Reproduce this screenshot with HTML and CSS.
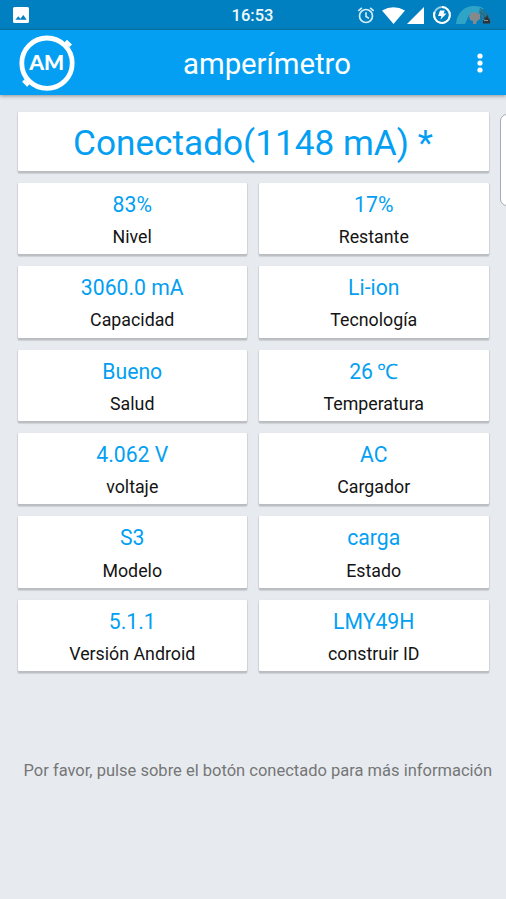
FILE: index.html
```html
<!DOCTYPE html>
<html lang="es">
<head>
<meta charset="utf-8">
<title>amperímetro</title>
<link rel="stylesheet" href="styles.css">
</head>
<body>
<header class="status">
  <svg class="status-photo" viewBox="0 0 16 16"><path fill="#fff" fill-rule="evenodd" d="M1.500 0h13a1.500 1.500 0 0 1 1.500 1.500v13a1.500 1.500 0 0 1-1.500 1.500h-13a1.500 1.500 0 0 1-1.500-1.500v-13a1.500 1.500 0 0 1 1.500-1.500zM2.500 12.800h11.200L10.300 8 7.400 11.700 5.200 9.200z"/></svg>
  <time class="clock">16:53</time>
  <div class="status-icons">
    <svg class="alarm" viewBox="0 0 18 18" fill="none" stroke="#d5edf7"><circle cx="9" cy="10" r="6.500" stroke-width="1.700"/><path stroke-width="1.600" d="M9 6.200v4.300l3 1.900M1.300 4.800l3.500-3M16.700 4.800l-3.500-3"/></svg>
    <svg class="wifi" viewBox="0 0 23 17"><path fill="#fff" d="M11.500 17L0 3.500Q11.500-3 23 3.500z"/></svg>
    <svg class="signal" viewBox="0 0 17 17"><path fill="#fff" d="M17 0v17H0z"/></svg>
    <svg class="charge" viewBox="0 0 18 18"><circle cx="9" cy="9" r="7.900" fill="none" stroke="#9fd0e6" stroke-width="2"/><path d="M9 1.100a7.900 7.900 0 1 1-7.400 5" fill="none" stroke="#fff" stroke-width="2"/><path fill="#fff" d="M7 4.500h4.800L10.600 7.500h2.900L7.400 13.800l1-3.800H5.100z"/></svg>
    <svg class="gauge" viewBox="0 0 36 18"><path fill="#2fa4c7" d="M0 18C1 7 8 0 18 0c5 0 8 1 10 3l-5 4-10 2-4 9z"/><path fill="#23708f" d="M24 2c7 3 10 8 11 15h-8l-4-10z"/><path stroke="#2fa4c7" stroke-dasharray="1 1.500" fill="none" d="M24 4c5 2 7 6 8 10M23 7c3 2 4 4 4 7"/><path fill="#85898b" d="M13 10l2-3 3-1 3 1 3 1v5l-3 2-1 3h-3v-3l-3-1z"/><path fill="#303237" d="M27 17.500v-3l2-1-1-2h2l1-3 1 3 2 3v3z"/><path stroke="#8d9292" d="M28 14.500h4"/></svg>
  </div>
</header>
<div class="appbar">
  <svg class="logo" viewBox="0 0 64 64"><g fill="none" stroke="#fff"><circle cx="32" cy="32.200" r="25.200" stroke-width="4.800"/><path stroke-width="4" d="M50 14.500l3.500-3.500M14 50l-3.500 3.500"/><path stroke-width="3.400" d="M50.800 10l5 4.800M8.300 49.600l5 4.800"/></g><text x="31.700" y="39" text-anchor="middle" textLength="35" lengthAdjust="spacingAndGlyphs">AM</text></svg>
  <h1>amperímetro</h1>
  <svg class="more" viewBox="0 0 6 20" fill="#fff"><circle cx="3" cy="3" r="2.600"/><circle cx="3" cy="10" r="2.600"/><circle cx="3" cy="17" r="2.600"/></svg>
</div>
<main>
  <section class="card total">Conectado(1148 mA) *</section>
  <div class="grid">
    <section class="card"><b>83%</b><span>Nivel</span></section>
    <section class="card"><b>17%</b><span>Restante</span></section>
    <section class="card"><b>3060.0 mA</b><span>Capacidad</span></section>
    <section class="card"><b>Li-ion</b><span>Tecnología</span></section>
    <section class="card"><b>Bueno</b><span>Salud</span></section>
    <section class="card"><b>26 <i>℃</i></b><span>Temperatura</span></section>
    <section class="card"><b>4.062 V</b><span>voltaje</span></section>
    <section class="card"><b>AC</b><span>Cargador</span></section>
    <section class="card"><b>S3</b><span>Modelo</span></section>
    <section class="card"><b>carga</b><span>Estado</span></section>
    <section class="card"><b>5.1.1</b><span>Versión Android</span></section>
    <section class="card"><b>LMY49H</b><span>construir ID</span></section>
  </div>
  <p class="hint">Por favor, pulse sobre el botón conectado para más información</p>
</main>
<div class="edge-tab"></div>
</body>
</html>
```
FILE: styles.css
```css
* { box-sizing: border-box; }
html, body { height: 100%; }
body {
  margin: 0;
  background: #e7ebf0;
  font-family: Roboto, "Liberation Sans", sans-serif;
  position: relative;
  overflow: hidden;
}
.status {
  display: grid;
  grid-template-columns: 1fr auto 1fr;
  align-items: center;
  height: 30px;
  padding: 0 14px 0 13px;
  background: #0080c0;
  border-bottom: 1px solid #087caf;
}
.status svg { display: block; flex: none; }
.status-photo { width: 16px; height: 16px; }
.clock { color: #f0faff; font-size: 16.500px; font-weight: 500; line-height: 28px; padding-top: 2px; }
.status-icons { display: flex; align-items: center; justify-content: flex-end; }
.alarm { width: 18px; height: 18px; margin-right: 7px; }
.wifi { width: 23px; height: 17px; margin-right: 2px; }
.signal { width: 17px; height: 17px; margin-right: 9px; }
.charge { width: 18px; height: 18px; margin-right: 5px; }
.gauge { width: 36px; height: 18px; }
.appbar {
  display: flex;
  align-items: center;
  height: 65px;
  padding: 0 23px 0 15px;
  background: #049ff2;
  box-shadow: 0 1px 4px rgba(0, 0, 0, .4);
}
.logo { width: 64px; height: 64px; }
.logo text { font: 900 20px Lato, sans-serif; fill: #fff; }
.appbar h1 {
  flex: 1;
  margin: 2px 0 0;
  padding-left: 104px;
  color: #fff;
  font-size: 29.300px;
  font-weight: 400;
}
.more { width: 6px; height: 20px; }
main { padding: 16.800px 17.500px 0; }
.card {
  background: #fff;
  border-radius: 1px;
  box-shadow: 0 1px 1px 1px rgba(0, 0, 0, .1), 0 3px 1px rgba(0, 0, 0, .1);
  text-align: center;
}
.total {
  height: 59px;
  line-height: 63px;
  font-size: 35.200px;
  color: #049ff2;
}
.grid {
  display: grid;
  grid-template-columns: 1fr 1fr;
  grid-auto-rows: 71.400px;
  gap: 12px;
  margin-top: 12px;
}
.grid .card { display: flex; flex-direction: column; align-items: center; padding-top: 8px; }
.card b { font-size: 21.200px; line-height: 28px; font-weight: 400; color: #049ff2; }
.card i { font-style: normal; letter-spacing: -1px; margin-right: 1px; margin-left: -1px; }
.card span { font-size: 17.800px; line-height: 24px; margin-top: 6.200px; color: #141414; }
.hint {
  margin: 88.300px -10px 0 6px;
  color: #767676;
  font-size: 16.500px;
  line-height: 24px;
  white-space: nowrap;
}
.edge-tab {
  position: absolute;
  top: 114px;
  right: -8px;
  width: 14px;
  height: 92px;
  border: 1px solid #a5abb0;
  border-radius: 8px;
  background: #fff;
}
```
